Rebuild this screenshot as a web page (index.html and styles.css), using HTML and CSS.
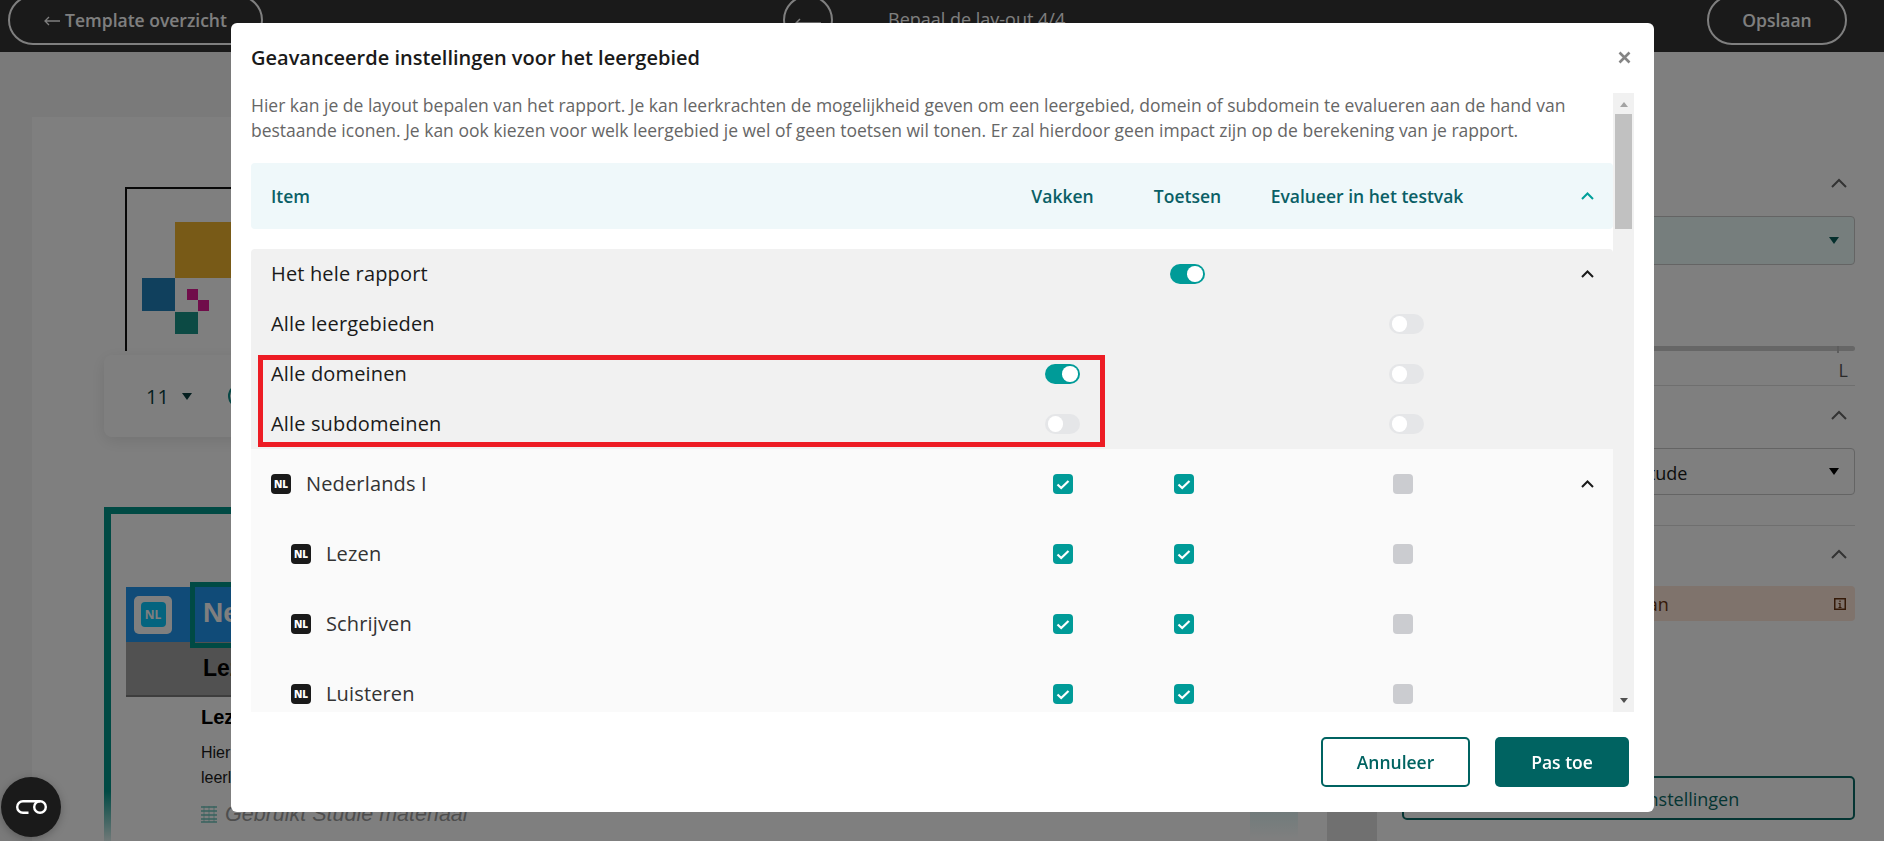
FILE: index.html
```html
<!DOCTYPE html>
<html lang="nl">
<head>
    <meta charset="UTF-8">
    <title>Geavanceerde instellingen</title>
    <link rel="stylesheet" href="styles.css">
</head>
<body>
    <header class="topbar">
        <a class="pill pill-back">
            <svg class="arrow" width="16" height="10" viewBox="0 0 16 10"><path d="M16 5H1M5 1L1 5l4 4" fill="none" stroke="#fff" stroke-width="1.3"/></svg>
            Template overzicht
        </a>
        <span class="round-back">
            <svg width="26" height="10" viewBox="0 0 26 10"><path d="M26 5H1M5 1L1 5l4 4" fill="none" stroke="#fff" stroke-width="1.5"/></svg>
        </span>
        <span class="step-title">Bepaal de lay-out 4/4</span>
        <a class="pill pill-save">Opslaan</a>
    </header>

    <main class="page">
        <section class="canvas">
            <div class="logo-frame">
                <svg class="logo" width="120" height="112" viewBox="0 0 120 112">
                    <rect x="33" y="0" width="85" height="56" fill="#f0b42e"/>
                    <rect x="0" y="56" width="33" height="33" fill="#2080ba"/>
                    <rect x="45" y="67" width="11" height="11" fill="#e01a94"/>
                    <rect x="56" y="78" width="11" height="11" fill="#e01a94"/>
                    <rect x="33" y="90" width="23" height="22" fill="#189488"/>
                </svg>
            </div>
            <div class="toolbar">
                <span class="font-size">11</span>
                <span class="caret"></span>
                <span class="tool-circle"></span>
            </div>
            <div class="preview">
                <div class="subject-head">
                    <span class="subject-badge"><span>NL</span></span>
                    <span class="subject-name">Ne</span>
                </div>
                <div class="sub-head">Lezen</div>
                <div class="preview-body">
                    <h4>Lezen</h4>
                    <p>Hier kan de leerkracht een beoordeling geven voor de<br>leerling op het onderdeel lezen</p>
                    <div class="material">
                        <svg width="16" height="18" viewBox="0 0 16 18"><path d="M0 2h16M0 6h16M0 10h16M0 14h16M0 17h16" stroke="#6fc5bd" stroke-width="1.4" fill="none"/><path d="M3 1v16M8 1v16M13 1v16" stroke="#6fc5bd" stroke-width=".7" fill="none"/></svg>
                        <em>Gebruikt Studie materiaal</em>
                        <span class="material-tag"></span>
                    </div>
                </div>
            </div>
        </section>
        <div class="gutter"></div>

        <aside class="side">
            <div class="side-chevron chev-1"><svg width="16" height="10" viewBox="0 0 16 10"><path d="M1 9l7-7 7 7" fill="none" stroke="#666" stroke-width="2"/></svg></div>
            <div class="side-select side-select-tint"><span></span><i class="caret caret-teal"></i></div>
            <div class="slider"><i></i></div>
            <div class="slider-label">L</div>
            <div class="side-line"></div>
            <div class="side-chevron chev-2"><svg width="16" height="10" viewBox="0 0 16 10"><path d="M1 9l7-7 7 7" fill="none" stroke="#666" stroke-width="2"/></svg></div>
            <div class="side-select side-select-plain"><span>Attitude</span><i class="caret caret-black"></i></div>
            <div class="side-line side-line-2"></div>
            <div class="side-chevron chev-3"><svg width="16" height="10" viewBox="0 0 16 10"><path d="M1 9l7-7 7 7" fill="none" stroke="#666" stroke-width="2"/></svg></div>
            <div class="side-note">
                <span>Let op: pas dit aan</span>
                <svg width="12" height="12" viewBox="0 0 12 12"><rect x=".75" y=".75" width="10.5" height="10.5" fill="none" stroke="#6b3410" stroke-width="1.5"/><path d="M6 2.500v1.500M6 5v4.500M4.500 5.500H6M4.500 9.500h3" stroke="#6b3410" stroke-width="1.2" fill="none"/></svg>
            </div>
            <a class="side-button">Geavanceerde instellingen</a>
        </aside>
    </main>

    <div class="backdrop">
        <div class="modal">
            <div class="modal-header">
                <h2>Geavanceerde instellingen voor het leergebied</h2>
                <svg class="close" width="13" height="13" viewBox="0 0 13 13"><path d="M1.500 1.500l10 10M11.500 1.500l-10 10" stroke="#858585" stroke-width="2.6" fill="none"/></svg>
            </div>

            <div class="modal-body">
                <div class="modal-scroll">
                    <p class="intro">Hier kan je de layout bepalen van het rapport. Je kan leerkrachten de mogelijkheid geven om een leergebied, domein of subdomein te evalueren aan de hand van bestaande iconen. Je kan ook kiezen voor welk leergebied je wel of geen toetsen wil tonen. Er zal hierdoor geen impact zijn op de berekening van je rapport.</p>

                    <div class="row table-head">
                        <span class="cell-name">Item</span>
                        <span class="cell">Vakken</span>
                        <span class="cell">Toetsen</span>
                        <span class="cell">Evalueer in het testvak</span>
                        <svg class="chevron" width="13" height="8" viewBox="0 0 13 8"><path d="M1 7l5.500-5.500L12 7" fill="none" stroke="#00a09a" stroke-width="2"/></svg>
                    </div>

                    <div class="group group-all">
                        <div class="row">
                            <span class="cell-name">Het hele rapport</span>
                            <span class="cell"></span>
                            <span class="cell"><i class="toggle on"></i></span>
                            <span class="cell"></span>
                            <svg class="chevron" width="13" height="8" viewBox="0 0 13 8"><path d="M1 7l5.500-5.500L12 7" fill="none" stroke="#1a1a1a" stroke-width="2"/></svg>
                        </div>
                        <div class="row">
                            <span class="cell-name">Alle leergebieden</span>
                            <span class="cell"></span>
                            <span class="cell"></span>
                            <span class="cell cell-eval"><i class="toggle"></i></span>
                        </div>
                        <div class="row">
                            <span class="cell-name">Alle domeinen</span>
                            <span class="cell"><i class="toggle on"></i></span>
                            <span class="cell"></span>
                            <span class="cell cell-eval"><i class="toggle"></i></span>
                        </div>
                        <div class="row">
                            <span class="cell-name">Alle subdomeinen</span>
                            <span class="cell"><i class="toggle"></i></span>
                            <span class="cell"></span>
                            <span class="cell cell-eval"><i class="toggle"></i></span>
                        </div>
                    </div>

                    <div class="group group-items">
                        <div class="row item">
                            <span class="cell-name"><b class="nl">NL</b>Nederlands I</span>
                            <span class="cell"><i class="check on"><svg width="14" height="11" viewBox="0 0 14 11"><path d="M1.500 5.500l3.700 3.500L12.500 2" fill="none" stroke="#fff" stroke-width="2.2"/></svg></i></span>
                            <span class="cell cell-toets"><i class="check on"><svg width="14" height="11" viewBox="0 0 14 11"><path d="M1.500 5.500l3.700 3.500L12.500 2" fill="none" stroke="#fff" stroke-width="2.2"/></svg></i></span>
                            <span class="cell cell-eval"><i class="check"></i></span>
                            <svg class="chevron" width="13" height="8" viewBox="0 0 13 8"><path d="M1 7l5.500-5.500L12 7" fill="none" stroke="#1a1a1a" stroke-width="2"/></svg>
                        </div>
                        <div class="row item nested">
                            <span class="cell-name"><b class="nl">NL</b>Lezen</span>
                            <span class="cell"><i class="check on"><svg width="14" height="11" viewBox="0 0 14 11"><path d="M1.500 5.500l3.700 3.500L12.500 2" fill="none" stroke="#fff" stroke-width="2.2"/></svg></i></span>
                            <span class="cell cell-toets"><i class="check on"><svg width="14" height="11" viewBox="0 0 14 11"><path d="M1.500 5.500l3.700 3.500L12.500 2" fill="none" stroke="#fff" stroke-width="2.2"/></svg></i></span>
                            <span class="cell cell-eval"><i class="check"></i></span>
                        </div>
                        <div class="row item nested">
                            <span class="cell-name"><b class="nl">NL</b>Schrijven</span>
                            <span class="cell"><i class="check on"><svg width="14" height="11" viewBox="0 0 14 11"><path d="M1.500 5.500l3.700 3.500L12.500 2" fill="none" stroke="#fff" stroke-width="2.2"/></svg></i></span>
                            <span class="cell cell-toets"><i class="check on"><svg width="14" height="11" viewBox="0 0 14 11"><path d="M1.500 5.500l3.700 3.500L12.500 2" fill="none" stroke="#fff" stroke-width="2.2"/></svg></i></span>
                            <span class="cell cell-eval"><i class="check"></i></span>
                        </div>
                        <div class="row item nested">
                            <span class="cell-name"><b class="nl">NL</b>Luisteren</span>
                            <span class="cell"><i class="check on"><svg width="14" height="11" viewBox="0 0 14 11"><path d="M1.500 5.500l3.700 3.500L12.500 2" fill="none" stroke="#fff" stroke-width="2.2"/></svg></i></span>
                            <span class="cell cell-toets"><i class="check on"><svg width="14" height="11" viewBox="0 0 14 11"><path d="M1.500 5.500l3.700 3.500L12.500 2" fill="none" stroke="#fff" stroke-width="2.2"/></svg></i></span>
                            <span class="cell cell-eval"><i class="check"></i></span>
                        </div>
                    </div>
                </div>

                <div class="scrollbar">
                    <i class="scroll-up"></i>
                    <i class="scroll-thumb"></i>
                    <i class="scroll-down"></i>
                </div>
            </div>

            <div class="modal-footer">
                <button class="btn btn-outline">Annuleer</button>
                <button class="btn btn-solid">Pas toe</button>
            </div>

            <!-- annotation in the screenshot -->
            <div class="highlight"></div>
        </div>
    </div>

    <div class="chat">
        <svg width="32" height="16" viewBox="0 0 32 16"><path d="M13.500 13.800H8a5.800 5.800 0 0 1 0-11.600H25" fill="none" stroke="#fff" stroke-width="2.4"/><circle cx="25" cy="8" r="5.800" fill="none" stroke="#fff" stroke-width="2.4"/></svg>
    </div>
</body>
</html>
```

FILE: styles.css
```css
* {
    box-sizing: border-box;
}
body {
    margin: 0;
    height: 841px;
    overflow: hidden;
    font-family: "Open Sans", "Noto Sans", sans-serif;
    background-color: #f4f4f4;
    color: #1a1a1a;
}

/* top bar behind the modal */
.topbar {
    display: flex;
    align-items: center;
    height: 52px;
    padding: 0 37px 0 8px;
    overflow: hidden;
    background-color: #343434;
    color: #fff;
}
.pill {
    display: flex;
    align-items: center;
    justify-content: center;
    height: 50px;
    margin-top: -12px;
    border: 2px solid #fff;
    border-radius: 25px;
    font-size: 17.5px;
    font-weight: 600;
}
.pill-back {
    width: 255px;
}
.pill-back .arrow {
    margin: 2px 5px 0 0;
}
.pill-save {
    width: 140px;
    margin-left: auto;
}
.round-back {
    display: flex;
    align-items: center;
    justify-content: center;
    width: 50px;
    height: 50px;
    margin: -12px 0 0 520px;
    padding-top: 5px;
    border: 2px solid #fff;
    border-radius: 50%;
}
.step-title {
    margin: -14px 0 0 55px;
    font-size: 18px;
}

/* page behind the modal */
.page {
    display: flex;
    height: 789px;
}
.canvas {
    width: 1295px;
    margin: 65px 0 0 32px;
    padding: 70px 0 0 72px;
    background-color: #fff;
    overflow: hidden;
}
.gutter {
    width: 50px;
    margin-top: 65px;
    background-color: #e0e0e0;
}
.logo-frame {
    width: 300px;
    height: 164px;
    margin-left: 21px;
    padding: 33px 0 0 15px;
    border-top: 2px solid #111;
    border-left: 2px solid #111;
}
.logo {
    display: block;
}
.toolbar {
    display: flex;
    align-items: center;
    width: 1150px;
    height: 82px;
    margin-top: 4px;
    padding-left: 42px;
    background-color: #fff;
    border-radius: 8px;
    box-shadow: 0 4px 16px rgba(0, 0, 0, .1);
}
.font-size {
    font-size: 20px;
    font-weight: 500;
    color: #0a3f40;
}
.caret {
    display: block;
    width: 0;
    height: 0;
    margin-left: 13px;
    border-left: 5.5px solid transparent;
    border-right: 5.5px solid transparent;
    border-top: 7px solid #0a3f40;
}
.tool-circle {
    width: 24px;
    height: 24px;
    margin-left: 36px;
    border: 2px solid #0d8f8a;
    border-radius: 50%;
}
.preview {
    width: 1194px;
    height: 340px;
    margin-top: 70px;
    padding: 73px 0 0 15px;
    border: 7px solid transparent;
    border-right: 0;
    border-bottom: 0;
    border-image: linear-gradient(#009488 83%, rgba(0, 148, 136, 0)) 1;
    font-family: "Liberation Sans", Arial, sans-serif;
}
.subject-head {
    display: flex;
    align-items: center;
    height: 55px;
    background-color: #2096f0;
}
.subject-badge {
    display: flex;
    align-items: center;
    justify-content: center;
    width: 38px;
    height: 38px;
    margin-left: 8px;
    background-color: #fff;
    border-radius: 5px;
}
.subject-badge span {
    display: flex;
    align-items: center;
    justify-content: center;
    width: 25px;
    height: 25px;
    background-color: #08c8ff;
    border-radius: 4px;
    color: #fff;
    font: 700 12px "Open Sans", sans-serif;
}
.subject-name {
    display: flex;
    align-items: center;
    flex: 1;
    height: 66px;
    margin-left: 18px;
    padding: 0 0 3px 8px;
    border: 5px solid #009488;
    color: #fff;
    font-size: 28px;
    font-weight: 700;
}
.sub-head {
    height: 55px;
    padding: 13px 0 0 77px;
    background-color: #a2a2a2;
    border-bottom: 2px solid #7a7a7a;
    font-size: 23px;
    font-weight: 700;
    color: #000;
}
.preview-body {
    padding-left: 75px;
}
.preview-body h4 {
    margin: 9px 0 0;
    font-size: 20px;
    color: #000;
}
.preview-body p {
    margin: 11px 0 0;
    font-size: 16px;
    line-height: 25px;
}
.material {
    display: flex;
    align-items: center;
    gap: 8px;
    height: 28px;
    margin-top: 10px;
    font-size: 21.5px;
    color: #9c9c9c;
}
.material-tag {
    width: 48px;
    height: 50px;
    margin-left: auto;
    background: linear-gradient(#dff6f6 40%, #fff);
}

/* right panel behind the modal */
.side {
    position: relative;
    width: 507px;
    background-color: #fff;
    padding: 0 29px 0 25px;
}
.side-chevron {
    display: flex;
    justify-content: flex-end;
    padding-right: 8px;
}
.side-chevron svg {
    display: block;
}
.chev-1 {
    margin-top: 126px;
}
.side-select {
    display: flex;
    align-items: center;
    justify-content: space-between;
    padding: 0 15px 0 217px;
    border: 1.5px solid #c8c8c8;
    border-radius: 4px;
    font-size: 18px;
}
.side-select-tint {
    height: 49px;
    margin-top: 28px;
    background-color: #ecfdfa;
}
.side-select-plain {
    height: 47px;
    margin-top: 28px;
}
.side-select-plain span {
    padding-top: 3px;
}
.caret-teal {
    border-top-color: #0a5f5b;
    margin: 0;
}
.caret-black {
    border-top-color: #000;
    margin: 0;
}
.slider {
    height: 5px;
    margin-top: 81px;
    background-color: #ccc;
    border-radius: 3px;
}
.slider i {
    display: block;
    width: 2px;
    height: 7px;
    margin-left: 435px;
    background-color: #bbb;
}
.slider-label {
    margin-top: 7px;
    text-align: right;
    padding-right: 7px;
    font-size: 18px;
    line-height: 24px;
    color: #555;
}
.side-line {
    height: 1px;
    margin-top: 3px;
    background-color: #dedede;
}
.chev-2 {
    margin-top: 24px;
}
.side-line-2 {
    margin-top: 30px;
}
.chev-3 {
    margin-top: 23px;
}
.side-note {
    display: flex;
    align-items: center;
    justify-content: space-between;
    height: 35px;
    margin-top: 27px;
    padding: 0 9px 0 113px;
    background-color: #ffe6d8;
    border-radius: 4px;
    font-size: 18px;
    color: #6b3410;
}
.side-button {
    display: flex;
    align-items: center;
    justify-content: center;
    height: 44px;
    margin-top: 155px;
    padding-top: 2px;
    border: 2.5px solid #0a6b66;
    border-radius: 5px;
    font-size: 18px;
    font-weight: 500;
    color: #0a6b66;
}

/* modal */
.backdrop {
    position: fixed;
    inset: 0;
    background-color: rgba(0, 0, 0, .5);
}
.modal {
    position: relative;
    display: flex;
    flex-direction: column;
    width: 1423px;
    height: 789px;
    margin: 23px 0 0 231px;
    background-color: #fff;
    border-radius: 6px;
}
.modal-header {
    display: flex;
    align-items: center;
    justify-content: space-between;
    height: 70px;
    padding: 0 23px 2px 20px;
}
.modal-header h2 {
    margin: 0;
    font-size: 20px;
    font-weight: 600;
    color: #1a1a1a;
}
.close {
    display: block;
}
.modal-body {
    display: flex;
    height: 619px;
    margin: 0 20px;
}
.modal-scroll {
    width: 1362px;
    overflow: hidden;
}
.intro {
    margin: 0 0 20px;
    font-size: 17.5px;
    line-height: 25px;
    color: #666;
}
.row {
    display: grid;
    grid-template-columns: 749px 125px 125px 234px 1fr;
    align-items: center;
    height: 50px;
    font-size: 20px;
}
.cell-name {
    display: flex;
    align-items: center;
    padding-left: 20px;
}
.group .cell-name {
    letter-spacing: .15px;
    line-height: 26px;
    padding-bottom: 1px;
}
.group .nl {
    margin-top: 1px;
    letter-spacing: 0;
}
.cell {
    display: flex;
    justify-content: center;
    align-items: center;
}
.chevron {
    grid-column: 5;
    justify-self: end;
    margin-right: 19px;
}
.table-head {
    height: 66px;
    background-color: #eff8fa;
    border-radius: 4px;
    font-size: 17.5px;
    font-weight: 600;
    color: #0a5f66;
}
.group {
    overflow: hidden;
}
.group-all {
    height: 200px;
    margin-top: 20px;
    background-color: #f1f1f1;
    border-radius: 4px 4px 0 0;
}
.group-items {
    background-color: #fafafa;
    color: #333;
}
.item {
    height: 70px;
}
.nl {
    display: flex;
    align-items: center;
    justify-content: center;
    width: 20px;
    height: 20px;
    margin-right: 15px;
    background-color: #1a1a1a;
    border-radius: 4px;
    color: #fff;
    font-size: 10px;
    font-weight: 800;
}
.nested .cell-name {
    padding-left: 40px;
}
.toggle {
    display: flex;
    align-items: center;
    width: 35px;
    height: 20px;
    padding: 0 2.5px;
    background-color: #e5e6e8;
    border-radius: 10px;
}
.toggle::after {
    content: "";
    width: 15.5px;
    height: 15.5px;
    background-color: #fff;
    border-radius: 50%;
}
.toggle.on {
    justify-content: flex-end;
    background-color: #009b98;
}
.cell-eval .toggle {
    margin-left: 79px;
}
.check {
    display: flex;
    align-items: center;
    justify-content: center;
    width: 20px;
    height: 20px;
    background-color: #cbccd0;
    border-radius: 4px;
}
.check.on {
    background-color: #009b98;
}
.cell-toets .check {
    margin-right: 7px;
}
.cell-eval .check {
    margin-left: 72px;
}

/* scrollbar is drawn, the browser shoots without one */
.scrollbar {
    display: flex;
    flex-direction: column;
    align-items: center;
    width: 21px;
    background-color: #f1f1f1;
}
.scroll-up,
.scroll-down {
    width: 0;
    height: 0;
    border-left: 4.5px solid transparent;
    border-right: 4.5px solid transparent;
}
.scroll-up {
    margin-top: 9px;
    border-bottom: 5px solid #a3a3a3;
}
.scroll-thumb {
    width: 17px;
    height: 115px;
    margin-top: 7px;
    background-color: #c1c1c1;
}
.scroll-down {
    margin-top: auto;
    margin-bottom: 9px;
    border-top: 5px solid #505050;
}
.modal-footer {
    display: flex;
    justify-content: flex-end;
    gap: 25px;
    padding: 25px 25px 0 0;
}
.btn {
    height: 50px;
    border-radius: 5px;
    font-family: inherit;
    font-size: 17.5px;
    font-weight: 600;
}
.btn-outline {
    width: 149px;
    background-color: #fff;
    border: 2px solid #006361;
    color: #006361;
}
.btn-solid {
    width: 134px;
    background-color: #006361;
    border: 0;
    color: #fff;
}
.highlight {
    position: absolute;
    left: 27px;
    top: 332px;
    width: 847px;
    height: 92px;
    border: 5px solid #ed1c24;
}

.chat {
    position: fixed;
    left: 1px;
    bottom: 4px;
    display: flex;
    align-items: center;
    justify-content: center;
    width: 60px;
    height: 60px;
    background-color: #1a1a1a;
    border-radius: 50%;
    box-shadow: 0 2px 8px rgba(0, 0, 0, .25);
}
```
